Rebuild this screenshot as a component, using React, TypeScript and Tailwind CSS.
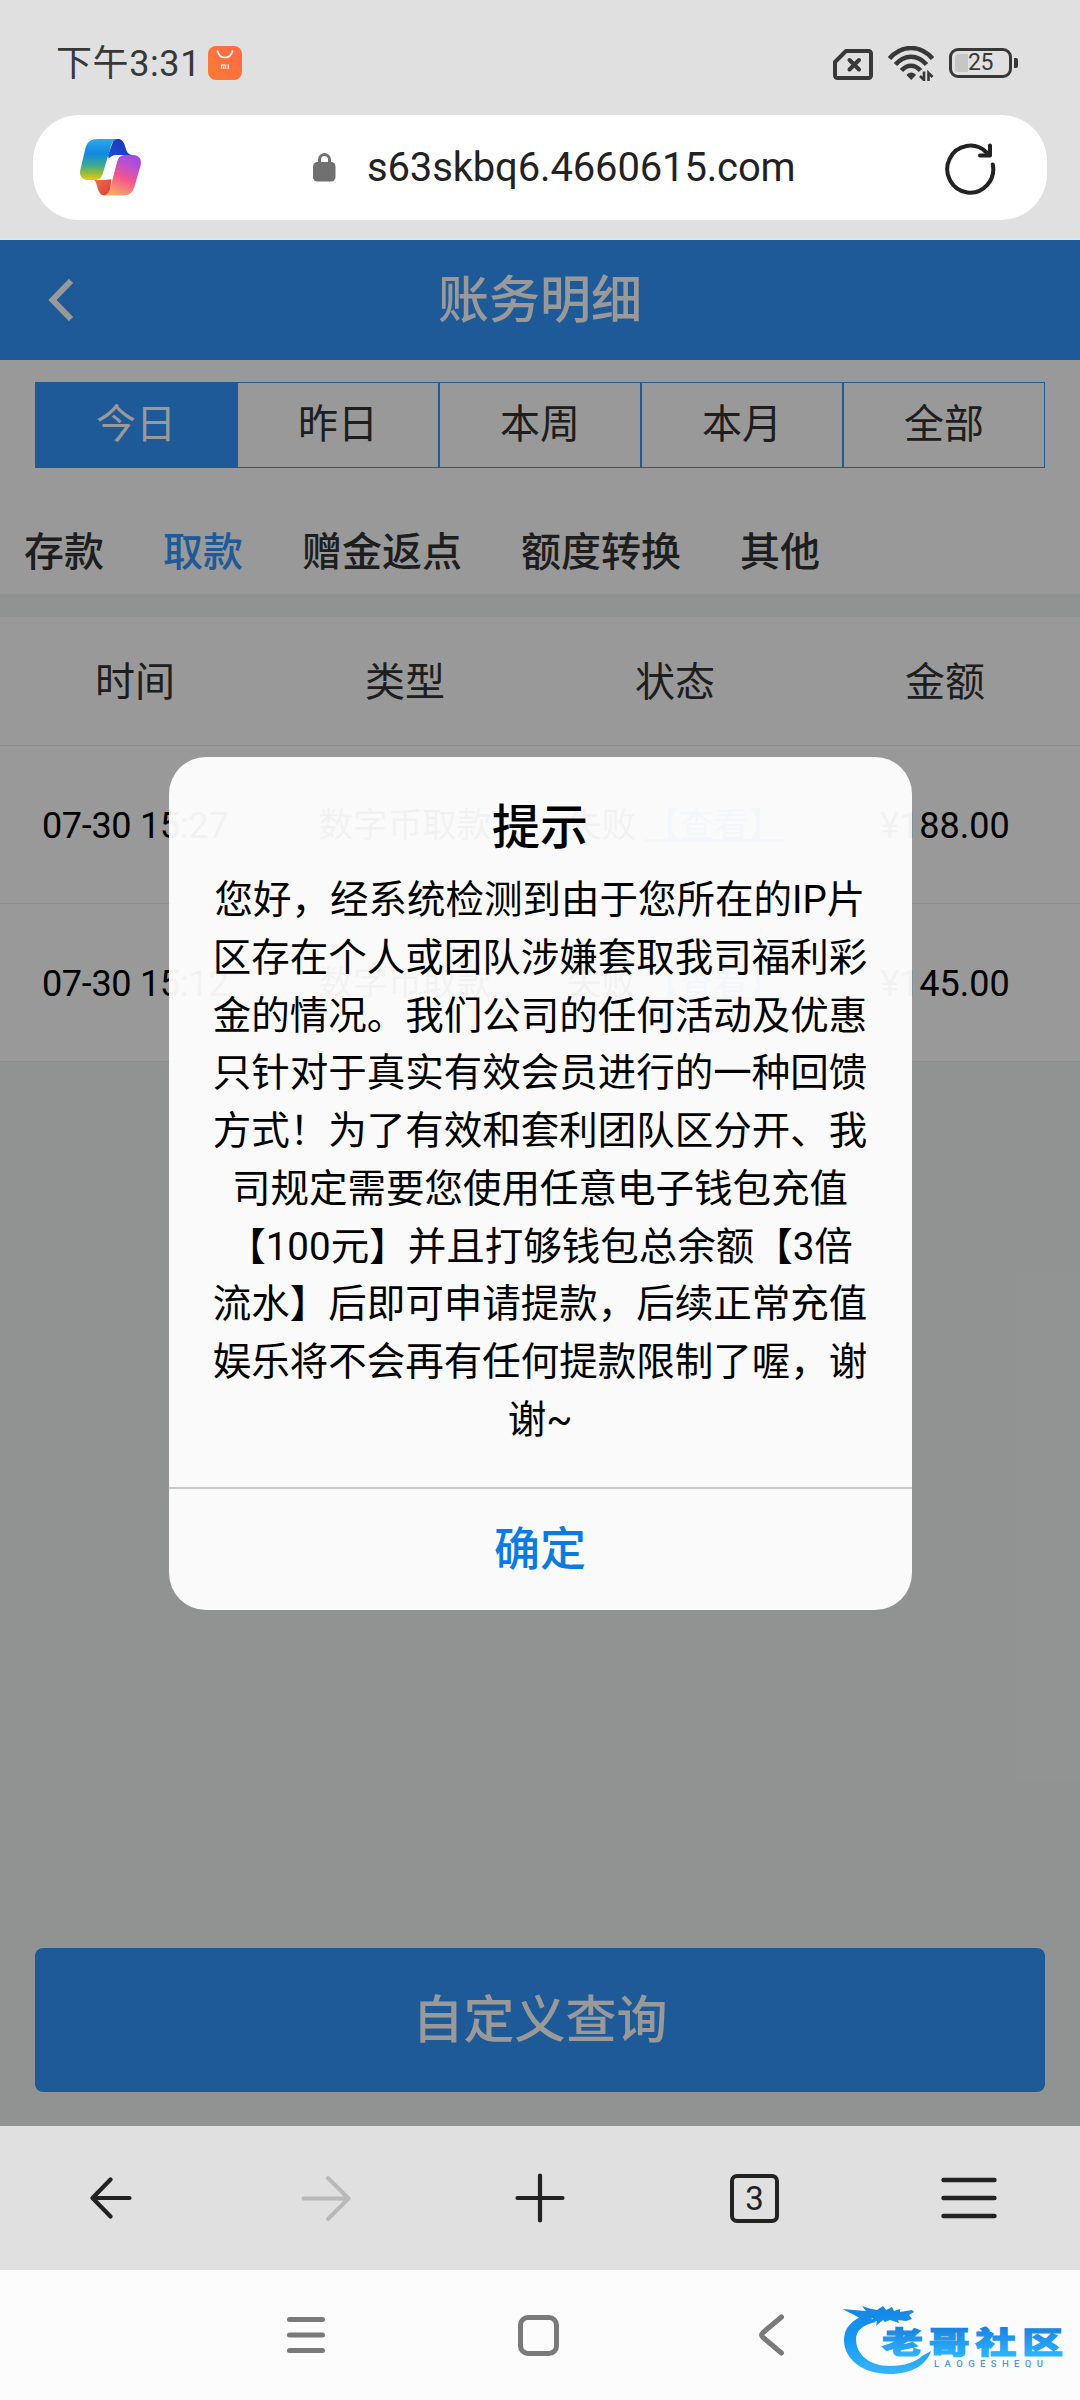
import { useState } from "react";

const ranges = ["今日", "昨日", "本周", "本月", "全部"];
const categories = ["存款", "取款", "赠金返点", "额度转换", "其他"];
const columns = ["时间", "类型", "状态", "金额"];

const records = [
  { time: "07-30 15:27", type: "数字币取款", status: "失败", amount: "¥188.00" },
  { time: "07-30 15:12", type: "数字币取款", status: "失败", amount: "¥145.00" },
];

const noticeLines = [
  "您好，经系统检测到由于您所在的IP片",
  "区存在个人或团队涉嫌套取我司福利彩",
  "金的情况。我们公司的任何活动及优惠",
  "只针对于真实有效会员进行的一种回馈",
  "方式！为了有效和套利团队区分开、我",
  "司规定需要您使用任意电子钱包充值",
  "【100元】并且打够钱包总余额【3倍",
  "流水】后即可申请提款，后续正常充值",
  "娱乐将不会再有任何提款限制了喔，谢",
  "谢~",
];

function StatusBar() {
  return (
    <div className="h-[115px] flex items-start pt-[46px] pl-[56px] pr-[62px] text-[#383838]">
      <span className="h-[34px] leading-[36px] text-[36px] tracking-[0.600px] whitespace-nowrap w-[152px]">下午3:31</span>
      <svg width="34" height="34" viewBox="0 0 34 34" fill="none">
        <defs>
          <linearGradient id="mi" x1="1" y1="0" x2="0" y2="1">
            <stop offset="0" stopColor="#ff6a45" />
            <stop offset="1" stopColor="#ff7a35" />
          </linearGradient>
        </defs>
        <rect width="34" height="34" rx="8" fill="url(#mi)" />
        <path d="M9.500 5c1 4 4 6.500 7.500 6.500S23.500 9 24.500 5" stroke="#fff" strokeWidth="1.600" strokeLinecap="round" />
        <path d="M13.500 23v-4h4v4M15.600 20.500V23M20.300 18.500V23" stroke="#fff" strokeWidth="1.200" />
      </svg>
      <div className="ml-auto flex items-start">
        <svg width="40" height="32" viewBox="0 0 40 32" fill="none" stroke="currentColor" className="mt-[3px]">
          <path d="M13 2h22.500a2.500 2.500 0 0 1 2.500 2.500v22a2.500 2.500 0 0 1-2.500 2.500h-31A2.500 2.500 0 0 1 2 26.500V13z" strokeWidth="4" strokeLinejoin="round" />
          <path d="m16.500 11 9.500 9.500M26 11l-9.500 9.500" strokeWidth="4" strokeLinecap="round" />
        </svg>
        <svg width="46" height="35" viewBox="0 0 46 35" fill="none" stroke="currentColor" className="ml-[15px]">
          <path d="M1.500 12.500C14-1.500 32-1.500 44.500 12.500" strokeWidth="4.500" />
          <path d="M7.500 18.500c9-10.500 22-10.500 31 0" strokeWidth="4.500" />
          <path d="M13.500 24.500c5.500-6.500 13.500-6.500 19 0" strokeWidth="4.500" />
          <path d="M18.500 29c2-3.500 7.500-3.500 9.500 0L23.200 34z" fill="currentColor" stroke="none" />
          <path d="M36 25.500V34l-4-4M40.500 35v-8l4 4" strokeWidth="2.600" />
        </svg>
        <div className="ml-[15px] mt-[2px] flex items-center">
          <div className="w-[63px] h-[30px] border-[3px] border-[#383838] rounded-[9px] relative flex items-center justify-center">
            <div className="absolute left-[3px] top-[3px] h-[18px] w-[13px] rounded-l-[4px] bg-[#c6c6c6]" />
            <span className="relative text-[23px] leading-[24px] tracking-[-0.5px]">25</span>
          </div>
          <div className="w-[4px] h-[10px] rounded-r-[2px] bg-[#383838] ml-[2px]" />
        </div>
      </div>
    </div>
  );
}

function CopilotLogo() {
  return (
    <svg width="61" height="57" viewBox="0 0 61 57">
      <defs>
        <linearGradient id="cpLeft" x1="0" y1="0" x2="0" y2="1">
          <stop offset="0" stopColor="#2ea9e6" />
          <stop offset="0.350" stopColor="#1088e2" />
          <stop offset="0.620" stopColor="#39a897" />
          <stop offset="0.820" stopColor="#8dbb3c" />
          <stop offset="1" stopColor="#f2c811" />
        </linearGradient>
        <linearGradient id="cpRight" x1="0.700" y1="0" x2="0.300" y2="1">
          <stop offset="0" stopColor="#a24ae6" />
          <stop offset="0.300" stopColor="#c452c4" />
          <stop offset="0.550" stopColor="#f2568c" />
          <stop offset="1" stopColor="#fdab63" />
        </linearGradient>
        <linearGradient id="cpTop" x1="0" y1="1" x2="1" y2="0">
          <stop offset="0" stopColor="#1e56dc" />
          <stop offset="1" stopColor="#1a2fae" />
        </linearGradient>
        <linearGradient id="cpBottom" x1="0" y1="0" x2="1" y2="1">
          <stop offset="0" stopColor="#fb7a4a" />
          <stop offset="1" stopColor="#d43c3c" />
        </linearGradient>
      </defs>
      <path d="M34 0h4c3.500 0 5.500 2.500 6.500 5.500l1.800 5.500c.9 2.800 2.800 5 6 5H38c-5 0-7 1-9 6l-1-6z" fill="url(#cpTop)" />
      <path d="M32 34l-1.500 3.500C29.500 40 27 41 22 41h-8c2 1.500 2.500 4 3.300 7 1.400 5 3.200 8.500 7.200 8.500L30 54z" fill="url(#cpBottom)" />
      <path d="M18 0h20c-4 .6-6 3-7.500 8.500L23 34c-1.500 5-3.500 7-9 7H8c-6 0-9-4-7.600-10.500L5.500 9C7.300 3 10.500 0 18 0z" fill="url(#cpLeft)" />
      <path d="M43 56.500H23.500c3.500-.6 5.500-3 7-8.500l6.500-25c1.500-5 3.500-7 9-7H53c6 0 9 4 7.600 10.500L54.500 47.500c-1.800 6-5 9-11.500 9z" fill="url(#cpRight)" />
      <path d="M38 16.500h3c-2.500 1.500-3.500 3.500-4.300 6.500L33 37c-.8 2.500-1.500 3.500-4 3.500h-9c2-1.500 3-3.500 3.800-6.500l3.700-12c1.500-4 4-5.500 10.500-5.500z" fill="#fff" />
    </svg>
  );
}

function AddressBar() {
  return (
    <div className="mx-[33px] h-[105px] rounded-[46px] bg-white flex items-center pl-[47px] pr-[51px] text-[#222]">
      <CopilotLogo />
      <svg width="23" height="29" viewBox="0 0 23 29" className="ml-[172px] shrink-0">
        <path d="M6.500 11V6.500a5 5 0 0 1 10 0V11" fill="none" stroke="#707070" strokeWidth="3" />
        <rect y="9" width="22.500" height="19.500" rx="4.500" fill="#707070" />
      </svg>
      <span className="ml-[31px] text-[40px] tracking-[-0.150px] leading-[50px] whitespace-nowrap">s63skbq6.4660615.com</span>
      <svg width="52" height="54" viewBox="0 0 52 54" fill="none" stroke="#222" strokeWidth="4" strokeLinecap="round" strokeLinejoin="round" className="ml-auto">
        <path d="M48.800 23.500A23 23.500 0 1 1 42.500 11.500" />
        <path d="M46 4.500V14.500H36" />
      </svg>
    </div>
  );
}

function BrowserToolbar() {
  return (
    <div className="h-[144px] bg-[#e0e0e0] flex items-center px-1 text-[#222]">
      <div className="flex-1 flex justify-center">
        <svg width="42" height="42" viewBox="0 0 42 42" fill="none" stroke="currentColor" strokeWidth="4.200" strokeLinecap="round" strokeLinejoin="round">
          <path d="M39.500 21H3M20.500 2.500 2.500 21l18 18.500" />
        </svg>
      </div>
      <div className="flex-1 flex justify-center text-[#b9b9b9]">
        <svg width="50" height="46" viewBox="0 0 50 46" fill="none" stroke="currentColor" strokeWidth="4" strokeLinecap="round" strokeLinejoin="round">
          <path d="M2.500 23.500H47M27 3l20.500 20.500L27 44" />
        </svg>
      </div>
      <div className="flex-1 flex justify-center">
        <svg width="50" height="50" viewBox="0 0 50 50" fill="none" stroke="currentColor" strokeWidth="4.200" strokeLinecap="round">
          <path d="M2.500 25h45M25 2.500v45" />
        </svg>
      </div>
      <div className="flex-1 flex justify-center">
        <div className="w-[49px] h-[49px] border-4 border-[#222] rounded-[7px] flex items-center justify-center text-[33px] leading-[41px]">3</div>
      </div>
      <div className="flex-1 flex justify-center">
        <svg width="56" height="42" viewBox="0 0 56 42" stroke="currentColor" strokeWidth="4.400" strokeLinecap="round">
          <path d="M2.500 3h51M2.500 21h51M2.500 39h51" />
        </svg>
      </div>
    </div>
  );
}

function CommunityLogo() {
  return (
    <svg width="232" height="76" viewBox="0 0 232 76">
      <defs>
        <linearGradient id="dragon" x1="0" y1="0" x2="0" y2="74" gradientUnits="userSpaceOnUse">
          <stop offset="0" stopColor="#1584e2" />
          <stop offset="0.500" stopColor="#1597f5" />
          <stop offset="1" stopColor="#38b6fb" />
        </linearGradient>
        <linearGradient id="word" x1="0" y1="-27" x2="0" y2="3" gradientUnits="userSpaceOnUse">
          <stop offset="0" stopColor="#1a7fdd" />
          <stop offset="1" stopColor="#2db4ff" />
        </linearGradient>
      </defs>
      <path d="M24 14C8 18 1 28 1 39c0 20 20 34 45 34 24 0 38-10 42-23l-9 5c-6 6-18 10-32 10-20 0-34-11-34-27 0-8 6-14 20-17z" fill="url(#dragon)" />
      <path d="M0 8c7 1 14 1 23 2l-4-5c5 2 10 3 15 4l6-4 3 4 6-3 2 4 6-2v3l12-2 2 2-5 3 3 4-6 2-8-1 1 3-9-3-5 2-2-2-7 6 1-5-6 1 2-4-7 2c-6-1-8-3-10-4-5-3-9-4-13-7z" fill="url(#dragon)" />
      <g transform="translate(39 52) scale(1.380 1)">
        <text x="0" y="0" fontSize="29.500" fontWeight="900" letterSpacing="4.400" fill="url(#word)" stroke="url(#word)" strokeWidth="1.200">
          老哥社区
        </text>
      </g>
      <text x="91" y="66" fontSize="9.500" fontWeight="500" fill="#4f9ade" textLength="109">
        LAOGESHEQU
      </text>
    </svg>
  );
}

function SystemNav() {
  return (
    <div className="h-[130px] bg-[#fcfcfc] flex items-center pl-[286px]">
      <svg width="40" height="40" viewBox="0 0 40 40" stroke="#7a7a7a" strokeWidth="5" strokeLinecap="round">
        <path d="M3.500 4.500h33M3.500 20h33M3.500 35.500h33" />
      </svg>
      <div className="ml-[192px] w-[41px] h-[41px] rounded-[10px] border-[5px] border-[#7a7a7a]" />
      <svg width="26" height="42" viewBox="0 0 26 42" fill="none" stroke="#7a7a7a" strokeWidth="5" strokeLinecap="round" strokeLinejoin="round" className="ml-[200px]">
        <path d="M22.500 3 4 18.500q-2.500 2.500 0 5L22.500 39" />
      </svg>
      <div className="ml-[58px] mt-[8px]">
        <CommunityLogo />
      </div>
    </div>
  );
}

function NoticeDialog({ onClose }: { onClose: () => void }) {
  return (
    <div className="w-[743px] h-[853px] rounded-[37px] bg-white/95 flex flex-col text-center text-black">
      <h2 className="pt-[35px] text-[48px] leading-[72px] font-medium">提示</h2>
      <div className="pt-[7px] flex-1 text-[38.500px] leading-[57.750px] whitespace-nowrap">
        {noticeLines.map((line) => (
          <p key={line}>{line}</p>
        ))}
      </div>
      <button onClick={onClose} className="h-[123px] border-t-2 border-[#c8c9ca] text-[46px] font-medium text-[#0a7be0]">
        确定
      </button>
    </div>
  );
}

export default function App() {
  const [range, setRange] = useState("今日");
  const [category, setCategory] = useState("取款");
  const [open, setOpen] = useState(true);

  return (
    <div className="w-[1080px] h-[2400px] overflow-hidden flex flex-col bg-[#e0e0e0] font-[Roboto,'Noto_Sans_CJK_SC',sans-serif]">
      <div className="h-[240px] shrink-0 border-b-2 border-[#dbe6ee]">
        <StatusBar />
        <AddressBar />
      </div>

      <div className="relative h-[1886px] shrink-0 bg-[#f2f6f4] flex flex-col text-[#333]">
        <header className="h-[120px] bg-[#3294fd] text-white flex items-center">
          <svg width="26" height="42" viewBox="0 0 26 42" fill="none" stroke="currentColor" strokeWidth="6" className="ml-[48px]">
            <path d="M23 2 4.500 21 23 40" />
          </svg>
          <h1 className="flex-1 text-center pr-[74px] pt-[2px] text-[51px] leading-[60px] font-medium">账务明细</h1>
        </header>

        <div className="bg-white h-[234px]">
          <div className="pt-[22px] px-[35px]">
            <div className="flex h-[86px]">
              {ranges.map((r) => (
                <button
                  key={r}
                  onClick={() => setRange(r)}
                  className={`flex-1 border border-[#3294fd] text-[40px] pb-[1px] ${r === range ? "bg-[#3294fd] text-white" : ""}`}
                >
                  {r}
                </button>
              ))}
            </div>
          </div>
          <div className="flex gap-[59px] pl-[24px] pt-[55px] text-[40px] leading-[60px] font-medium">
            {categories.map((c) => (
              <button key={c} onClick={() => setCategory(c)} className={c === category ? "text-[#3294fd]" : ""}>
                {c}
              </button>
            ))}
          </div>
        </div>

        <div className="mt-[23px] bg-white">
          <div className="grid grid-cols-4 h-[129px] pt-[3px] items-center text-center text-[40px] border-b border-[#e6e9e8]">
            {columns.map((c) => (
              <span key={c}>{c}</span>
            ))}
          </div>
          {records.map((r) => (
            <div key={r.time} className="grid grid-cols-4 h-[158px] pt-[3px] items-center text-center text-[34.600px] text-black whitespace-nowrap border-b border-[#e6e9e8]">
              <span className="text-[36px] tracking-[-0.300px]">{r.time}</span>
              <span>{r.type}</span>
              <span>
                {r.status} <a className="text-[#3294fd] underline">【查看】</a>
              </span>
              <span className="text-[36px]">{r.amount}</span>
            </div>
          ))}
        </div>

        <button className="mt-auto mb-[34px] mx-[35px] h-[144px] pt-[3px] rounded-[8px] bg-[#3294fd] text-white text-[51px] font-medium">
          自定义查询
        </button>

        {open && (
          <div className="absolute inset-0 bg-black/40 flex justify-center items-start pt-[517px]">
            <NoticeDialog onClose={() => setOpen(false)} />
          </div>
        )}
      </div>

      <BrowserToolbar />
      <SystemNav />
    </div>
  );
}
